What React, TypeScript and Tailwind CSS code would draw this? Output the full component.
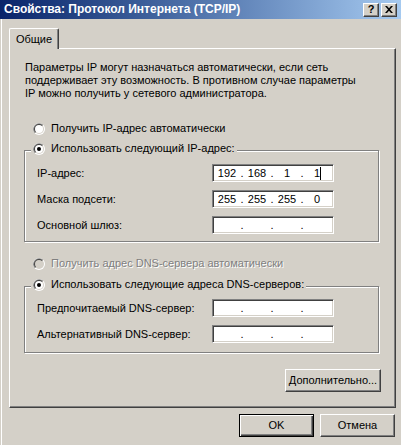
import React from "react";

const raised =
  "border border-t-white border-l-white border-r-[#404040] border-b-[#404040] shadow-[inset_-1px_-1px_0_#808080]";
const sunken =
  "border border-t-[#808080] border-l-[#808080] border-r-white border-b-white shadow-[inset_1px_1px_0_#404040,inset_-1px_-1px_0_#d4d0c8]";

function Radio({ checked, disabled }: { checked?: boolean; disabled?: boolean }) {
  return (
    <svg width="12" height="12" viewBox="0 0 12 12" className="shrink-0">
      <circle cx="6" cy="6" r="6" fill="#ffffff" />
      <path d="M10.24 1.76 A6 6 0 0 0 1.76 10.24 Z" fill="#808080" />
      <circle cx="6" cy="6" r="5" fill="#d4d0c8" />
      <path d="M9.54 2.46 A5 5 0 0 0 2.46 9.54 Z" fill="#404040" />
      <circle cx="6" cy="6" r="4" fill={disabled ? "#d4d0c8" : "#ffffff"} />
      {checked && <circle cx="6" cy="6" r="2" fill={disabled ? "#808080" : "#000000"} />}
    </svg>
  );
}

function RadioRow({
  label,
  checked,
  disabled,
}: {
  label: string;
  checked?: boolean;
  disabled?: boolean;
}) {
  return (
    <div className="flex items-center h-[13px] gap-[6px]">
      <Radio checked={checked} disabled={disabled} />
      <span
        className={
          disabled ? "text-[#808080] [text-shadow:1px_1px_0_#ffffff]" : "text-black"
        }
      >
        {label}
      </span>
    </div>
  );
}

function IpField({ parts, cursor }: { parts: string[]; cursor?: boolean }) {
  return (
    <div className={`w-[122px] h-[18px] bg-white flex items-center pl-[1px] ${sunken}`}>
      {parts.map((p, i) => (
        <React.Fragment key={i}>
          <span className="w-[26px] text-center relative">
            {p}
            {cursor && i === 3 && (
              <span className="absolute left-[16px] top-[0px] w-px h-[13px] bg-black" />
            )}
          </span>
          {i < 3 && <span className="w-[4px] text-center">.</span>}
        </React.Fragment>
      ))}
    </div>
  );
}

function FieldRow({ label, parts, cursor }: { label: string; parts: string[]; cursor?: boolean }) {
  return (
    <div className="flex items-center h-[18px]">
      <span className="w-[175px]">{label}</span>
      <IpField parts={parts} cursor={cursor} />
    </div>
  );
}

function GroupBox({
  legend,
  children,
  className,
}: {
  legend: React.ReactNode;
  children: React.ReactNode;
  className?: string;
}) {
  return (
    <div
      className={`w-[355px] flex flex-col border border-[#808080] shadow-[inset_1px_1px_0_#ffffff,1px_1px_0_#ffffff] ${className ?? ""}`}
    >
      <div className="-mt-[9px] ml-[6px] self-start px-[2px] bg-[#d4d0c8]">{legend}</div>
      {children}
    </div>
  );
}

function Button({ children, isDefault, className }: { children: React.ReactNode; isDefault?: boolean; className?: string }) {
  return (
    <div
      className={`h-[23px] flex items-center justify-center ${
        isDefault
          ? "border border-black shadow-[inset_1px_1px_0_#ffffff,inset_-1px_-1px_0_#404040,inset_-2px_-2px_0_#808080]"
          : raised
      } ${className ?? ""}`}
    >
      {children}
    </div>
  );
}

const empty = ["", "", "", ""];

export default function App() {
  return (
    <div className="w-[401px] h-[445px] bg-[#d4d0c8] flex flex-col overflow-hidden font-['Liberation_Sans',Arial,sans-serif] text-[11px] leading-[13px] text-black">
      {/* заголовок окна */}
      <div className="h-[19px] shrink-0 flex items-center bg-gradient-to-r from-[#0a246a] to-[#a6caf0]">
        <span className="pl-[4px] font-bold text-white text-[12px]">
          Свойства: Протокол Интернета (TCP/IP)
        </span>
        <div className="ml-auto mr-[4px] flex gap-[2px]">
          <div className={`w-[16px] h-[14px] bg-[#d4d0c8] flex items-center justify-center font-bold text-[11px] leading-none ${raised}`}>
            ?
          </div>
          <div className={`w-[16px] h-[14px] bg-[#d4d0c8] flex items-center justify-center ${raised}`}>
            <svg width="8" height="7" viewBox="0 0 8 7">
              <path d="M0 0h2l2 2.2L6 0h2L5 3.5 8 7H6L4 4.8 2 7H0l3-3.5z" fill="#000" />
            </svg>
          </div>
        </div>
      </div>

      <div className="flex-1 ml-px border-l border-white pl-[7px] pt-[9px] flex flex-col">
        {/* вкладка */}
        <div className="relative z-10 -mb-px w-[50px] h-[21px] bg-[#d4d0c8] rounded-t-[2px] border-t border-l border-white border-r border-r-[#404040] shadow-[inset_-1px_0_0_#808080] flex items-center justify-center">
          Общие
        </div>

        {/* панель */}
        <div className="w-[387px] h-[360px] border border-t-white border-l-white border-r-[#404040] border-b-[#404040] shadow-[inset_-1px_-1px_0_#808080] pt-[12px] pl-[14px] flex flex-col">
          <p className="pl-[1px]">
            Параметры IP могут назначаться автоматически, если сеть
            <br />
            поддерживает эту возможность. В противном случае параметры
            <br />
            IP можно получить у сетевого администратора.
          </p>

          <div className="mt-[22px] pl-[9px]">
            <RadioRow label="Получить IP-адрес автоматически" />
          </div>

          <GroupBox
            className="mt-[15px]"
            legend={<RadioRow label="Использовать следующий IP-адрес:" checked />}
          >
            <div className="mt-[9px] pl-[12px] pb-[7px] flex flex-col gap-[8px]">
              <FieldRow label="IP-адрес:" parts={["192", "168", "1", "1"]} cursor />
              <FieldRow label="Маска подсети:" parts={["255", "255", "255", "0"]} />
              <FieldRow label="Основной шлюз:" parts={empty} />
            </div>
          </GroupBox>

          <div className="mt-[15px] pl-[9px]">
            <RadioRow label="Получить адрес DNS-сервера автоматически" disabled />
          </div>

          <GroupBox
            className="mt-[16px]"
            legend={<RadioRow label="Использовать следующие адреса DNS-серверов:" checked />}
          >
            <div className="mt-[8px] pl-[12px] pb-[9px] flex flex-col gap-[8px]">
              <FieldRow label="Предпочитаемый DNS-сервер:" parts={empty} />
              <FieldRow label="Альтернативный DNS-сервер:" parts={empty} />
            </div>
          </GroupBox>

          <div className="mt-[16px] w-[357px] flex justify-end">
            <Button className="w-[96px]">Дополнительно...</Button>
          </div>
        </div>

        {/* кнопки диалога */}
        <div className="mt-[6px] w-[386px] flex justify-end gap-[6px]">
          <Button isDefault className="w-[75px]">
            OK
          </Button>
          <Button className="w-[75px]">Отмена</Button>
        </div>
      </div>
    </div>
  );
}
